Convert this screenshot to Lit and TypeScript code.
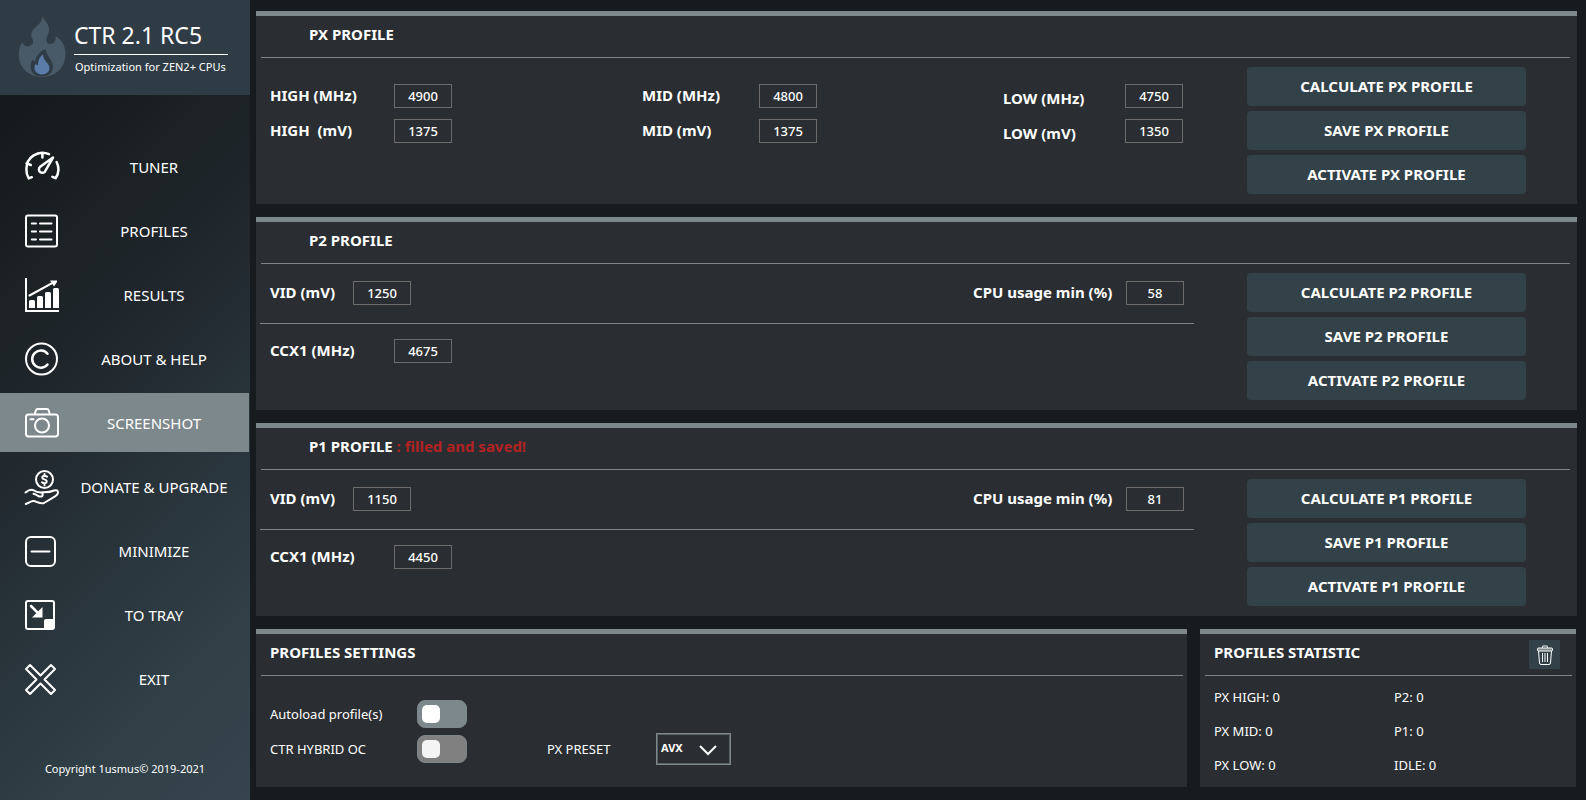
import { LitElement, html, css, svg, nothing, TemplateResult } from "lit";
import { customElement, property, state } from "lit/decorators.js";
import { classMap } from "lit/directives/class-map.js";

const icons: Record<string, TemplateResult> = {
  tuner: svg`
    <path class="bold" d="M6.800 27.200 3.800 28.400A16 16 0 0 1 1.400 19 16 16 0 0 1 24 4.200M31.600 12A16 16 0 0 1 30.600 28.200L27.400 26.800M17.400 3v4.500M1.600 13.400 5.800 15"/>
    <path class="bold" d="M28 7.600 20.600 20.400a3.400 3.400 0 1 1-5.400-3.600Z"/>`,
  profiles: svg`
    <rect x="1" y="1.500" width="31" height="31" rx="2"/>
    <path d="M6.800 9.500H11M15 9.500H26.500M6.800 17.500H11M15 17.500H26.500M6.800 25.500H11M15 25.500H26.500"/>`,
  results: svg`
    <path class="square" d="M1 0V33H34"/>
    <path d="M4.500 17.500 28 4.600"/>
    <path class="solid" d="M25 2.500h7v1.500l-3 4.500ZM4 23.500q0-1.500 1.500-1.500h3q1.500 0 1.500 1.500V30H4ZM12 19.500q0-1.500 1.500-1.500h3q1.500 0 1.500 1.500V30h-6ZM20 15.500q0-1.500 1.500-1.500h3q1.500 0 1.500 1.500V30h-6ZM28 11.500q0-1.500 1.500-1.500h3q1.500 0 1.500 1.500V30h-6Z"/>`,
  about: svg`
    <circle cx="16.500" cy="17" r="15.500"/>
    <path class="bold" d="M22.500 11.700A8.600 8.600 0 1 0 22.500 22.500"/>`,
  screenshot: svg`
    <path d="M3.500 8.500H9.500L11 4.200Q11.300 3 12.600 3H22Q23.200 3 23.600 4.200L25 8.500H30.500Q33 8.500 33 11V28Q33 30.400 30.500 30.400H3.500Q1 30.400 1 28V11Q1 8.500 3.500 8.500ZM9.500 8.500H25M5.500 13.200H8.500"/>
    <circle cx="17" cy="19.500" r="7"/>`,
  donate: svg`
    <circle cx="19.500" cy="9.500" r="8.500"/>
    <path d="M22 6.600Q19.500 5 17.600 6.300 16.400 8.400 19.500 9.400 22.600 10.400 21.400 12.500 19.500 13.900 17 12.400M19.500 4V6M19.500 13.500V15.200"/>
    <path d="M.500 22.500Q5 18.800 8.500 20.200 12.500 23 17.500 22.300 24.500 22.500 29 20.500 33 19.400 33 22.600 33 25 28 27.600L19 33Q17 34 12.500 32.300 8.500 30.500 6.500 31.400L.800 34M8.500 23.800Q11 24.400 13.500 26.300 17.500 27.200 17.600 25.500V22.500"/>`,
  minimize: svg`
    <rect x="1" y="3" width="29" height="29" rx="5"/>
    <path d="M6.500 17.500H24.500"/>`,
  tray: svg`
    <rect x="1" y="3" width="28" height="28" rx="2"/>
    <path class="bold" d="M6 8 13 15"/>
    <path class="solid" d="M17.500 9V19.500H7ZM19 23q0-2 2-2h8v10H19Z"/>`,
  exit: svg`
    <path d="M5 3 15.500 13.500 26 3 30 7 19.500 17.500 30 28 26 32 15.500 21.500 5 32 1 28 11.500 17.500 1 7Z"/>`,
};

interface NavItem {
  id: string;
  label: string;
}

const navItems: NavItem[] = [
  { id: "tuner", label: "TUNER" },
  { id: "profiles", label: "PROFILES" },
  { id: "results", label: "RESULTS" },
  { id: "about", label: "ABOUT & HELP" },
  { id: "screenshot", label: "SCREENSHOT" },
  { id: "donate", label: "DONATE & UPGRADE" },
  { id: "minimize", label: "MINIMIZE" },
  { id: "tray", label: "TO TRAY" },
  { id: "exit", label: "EXIT" },
];

@customElement("ctr-sidebar")
export class CtrSidebar extends LitElement {
  @state() private selected = "screenshot";

  static styles = css`
    :host {
      display: flex;
      flex-direction: column;
      width: 250px;
      flex: none;
      background: linear-gradient(135deg, #14191b 10%, #1a2022 25%, #20272d 43%, #28333a 62%, #313f47 82%, #36444d 100%);
      color: #fff;
    }
    .brand {
      display: flex;
      align-items: center;
      gap: 8px;
      height: 95px;
      padding: 0 22px 2px 18px;
      box-sizing: border-box;
      background: #2f3c45;
    }
    .flame {
      flex: none;
      width: 48px;
      height: 62px;
    }
    .title {
      margin: 0;
      padding-bottom: 2px;
      border-bottom: 1px solid #fff;
      font-size: 23px;
      line-height: 34px;
      font-weight: 400;
    }
    .words {
      flex: 1;
      white-space: nowrap;
    }
    .tagline {
      margin: 0;
      padding: 3px 0 0 1px;
      font-size: 11px;
      line-height: 18px;
    }
    nav {
      display: flex;
      flex-direction: column;
      gap: 5px;
      padding-top: 42px;
      margin-right: 1px;
    }
    .item {
      display: grid;
      grid-template-columns: 34px 1fr;
      align-items: center;
      height: 59px;
      padding: 0 0 0 25px;
      border: 0;
      background: none;
      color: inherit;
      font: 15px/20px "Noto Sans", sans-serif;
      cursor: pointer;
    }
    .item.selected {
      background: #7c888b;
    }
    .item svg {
      width: 34px;
      height: 34px;
      overflow: visible;
      fill: none;
      stroke: #fff;
      stroke-width: 2;
      stroke-linecap: round;
      stroke-linejoin: round;
    }
    .item .solid {
      fill: #fff;
      stroke: none;
    }
    .item .bold {
      stroke-width: 2.5;
    }
    .item .square {
      stroke-linecap: butt;
      stroke-linejoin: miter;
    }
    .copyright {
      margin: auto 0 22px;
      font-size: 11px;
      line-height: 18px;
      text-align: center;
    }
  `;

  render() {
    return html`
      <header class="brand">
        <svg class="flame" viewBox="0 0 48 62" aria-hidden="true">
          <path fill="#485968" d="M24 1C31 8 33 13 29.500 19.500 26.500 25 30 29.500 34 27.500 37.500 25.500 38 23 37.500 20 44 23.500 48 31 47.500 39 47 52 37 61 24 61S1 52 .800 39C.700 33 2 29 4.500 26 5 30 9 31.500 12.500 29.500 16.500 27 15 24 13.500 21 12.500 15 16 12.500 19.500 9.500 22.500 7 24 4.500 24 1Z"/>
          <path fill="#2f3c45" d="M27.500 33C28 37.500 30 39.500 32.500 43.500 38 52 34 60.500 24 60.500S10 52 14.500 44L17.500 46C17 41 21 36 27.500 33Z"/>
          <path fill="#5b7ba8" d="M25 38.500C25.500 43 27 44 29.500 47.500 34 53 30 58.500 24 58.500S14.500 53 17.500 48L20 49.500C20 45 21 41 25 38.500Z"/>
        </svg>
        <div class="words">
          <h1 class="title">CTR 2.1 RC5</h1>
          <p class="tagline">Optimization for ZEN2+ CPUs</p>
        </div>
      </header>
      <nav>
        ${navItems.map(
          (item) => html`
            <button
              class=${classMap({ item: true, selected: item.id === this.selected })}
              @click=${() => (this.selected = item.id)}
            >
              <svg viewBox="0 0 34 34" aria-hidden="true">${icons[item.id]}</svg>
              <span>${item.label}</span>
            </button>
          `
        )}
      </nav>
      <p class="copyright">Copyright 1usmus© 2019-2021</p>
    `;
  }
}

/** Titled card with the grey strip on top; body goes into the default slot. */
@customElement("ctr-panel")
export class CtrPanel extends LitElement {
  @property() heading = "";
  @property() note = "";
  @property({ type: Boolean }) indented = false;

  static styles = css`
    :host {
      display: block;
      border-top: 5px solid #7c888b;
      background: #2a2e32;
    }
    .head {
      display: flex;
      align-items: center;
      justify-content: space-between;
      box-sizing: border-box;
      height: 42px;
      margin: 0 4px 0 5px;
      padding: 0 12px 6px 9px;
      border-bottom: 1px solid #7c8488;
    }
    .head.indented {
      margin-right: 7px;
      padding-left: 48px;
    }
    h2 {
      margin: 0;
      font-size: 15px;
      line-height: 20px;
      font-weight: 700;
    }
    .note {
      color: #b22222;
    }
  `;

  render() {
    return html`
      <div class=${classMap({ head: true, indented: this.indented })}>
        <h2>${this.heading}${this.note ? html` <span class="note">${this.note}</span>` : nothing}</h2>
        <slot name="action"></slot>
      </div>
      <slot></slot>
    `;
  }
}

@customElement("ctr-profile")
export class CtrProfile extends LitElement {
  @property() name = "";
  @property() note = "";
  @property() vid = "";
  @property() usage = "";
  @property() ccx = "";

  static styles = css`
    .body {
      display: flex;
      gap: 53px;
      padding: 9px 51px 10px 4px;
    }
    .fields {
      flex: 1;
    }
    .levels {
      display: grid;
      grid-template-columns: 372fr 361fr 181px;
      row-gap: 11px;
      padding: 17px 10px 0 10px;
    }
    .row {
      display: flex;
      justify-content: space-between;
      padding: 8px 10px 18px;
      border-bottom: 1px solid #7c8488;
    }
    .row.last {
      padding-top: 15px;
      border-bottom: 0;
    }
    .field {
      display: flex;
      align-items: center;
      height: 24px;
      font-size: 15px;
      line-height: 20px;
      font-weight: 700;
      white-space: pre;
    }
    .field label {
      padding-bottom: 3px;
    }
    .high label,
    .ccx label {
      width: 124px;
    }
    .mid label {
      width: 117px;
    }
    .low label {
      width: 122px;
      padding: 3px 0 0;
    }
    .vid label {
      width: 83px;
    }
    .usage label {
      width: 153px;
    }
    input {
      box-sizing: border-box;
      width: 58px;
      height: 24px;
      padding: 0;
      border: 1px solid #6e6c6b;
      background: none;
      color: #fff;
      font: 500 13px/18px "Noto Sans", sans-serif;
      text-align: center;
    }
    .actions {
      display: flex;
      flex-direction: column;
      gap: 5px;
      width: 279px;
    }
    .actions button {
      height: 39px;
      padding: 0 0 1px;
      border: 0;
      border-radius: 4px;
      background: #334148;
      color: #fff;
      font: 700 15px/20px "Noto Sans", sans-serif;
      cursor: pointer;
    }
  `;

  private field(kind: string, id: string, label: string, value: string) {
    return html`<div class="field ${kind}"><label for=${id}>${label}</label><input id=${id} .value=${value} /></div>`;
  }

  render() {
    const fields = this.vid
      ? html`
          <div class="row">
            ${this.field("vid", "vid", "VID (mV)", this.vid)}
            ${this.field("usage", "usage", "CPU usage min (%)", this.usage)}
          </div>
          <div class="row last">${this.field("ccx", "ccx", "CCX1 (MHz)", this.ccx)}</div>
        `
      : html`
          <div class="levels">
            ${this.field("high", "high-mhz", "HIGH (MHz)", "4900")}
            ${this.field("mid", "mid-mhz", "MID (MHz)", "4800")}
            ${this.field("low", "low-mhz", "LOW (MHz)", "4750")}
            ${this.field("high", "high-mv", "HIGH  (mV)", "1375")}
            ${this.field("mid", "mid-mv", "MID (mV)", "1375")}
            ${this.field("low", "low-mv", "LOW (mV)", "1350")}
          </div>
        `;
    return html`
      <ctr-panel indented .heading=${`${this.name} PROFILE`} .note=${this.note}>
        <div class="body">
          <div class="fields">${fields}</div>
          <div class="actions">
            ${["CALCULATE", "SAVE", "ACTIVATE"].map((verb) => html`<button>${verb} ${this.name} PROFILE</button>`)}
          </div>
        </div>
      </ctr-panel>
    `;
  }
}

@customElement("ctr-settings")
export class CtrSettings extends LitElement {
  static styles = css`
    .body {
      display: flex;
      align-items: flex-end;
      gap: 80px;
      padding: 24px 14px 22px;
      font-size: 13px;
      line-height: 18px;
    }
    .toggles {
      display: grid;
      grid-template-columns: 147px 50px;
      row-gap: 7px;
      align-items: center;
      padding-bottom: 2px;
    }
    .toggle {
      appearance: none;
      display: flex;
      align-items: center;
      box-sizing: border-box;
      width: 50px;
      height: 28px;
      margin: 0;
      padding-left: 4px;
      border: 1px solid #7c888b;
      border-radius: 8px;
      background: #7c888b;
    }
    .toggle::before {
      content: "";
      width: 18px;
      height: 18px;
      border-radius: 5px;
      background: #fff;
    }
    .toggle:disabled {
      background: #808080;
    }
    .toggle:disabled::before {
      background: #f4f4f4;
    }
    .preset {
      display: flex;
      align-items: center;
    }
    .preset label {
      width: 109px;
    }
    .picker {
      position: relative;
    }
    select {
      appearance: none;
      display: block;
      box-sizing: border-box;
      width: 75px;
      height: 32px;
      padding: 0 0 2px 4px;
      border: 1px solid #7c888b;
      outline: 1px solid #596367;
      outline-offset: -2px;
      border-radius: 0;
      background: none;
      color: #fff;
      font: 700 11px/16px "Noto Sans", sans-serif;
    }
    .chevron {
      position: absolute;
      right: 14px;
      top: 12px;
      width: 18px;
      height: 11px;
      pointer-events: none;
    }
  `;

  render() {
    return html`
      <ctr-panel heading="PROFILES SETTINGS">
        <div class="body">
          <div class="toggles">
            <label for="autoload">Autoload profile(s)</label>
            <input class="toggle" type="checkbox" id="autoload" />
            <label for="hybrid">CTR HYBRID OC</label>
            <input class="toggle" type="checkbox" id="hybrid" disabled />
          </div>
          <div class="preset">
            <label for="preset">PX PRESET</label>
            <div class="picker">
              <select id="preset">
                <option>AVX</option>
              </select>
              <svg class="chevron" viewBox="0 0 18 11" aria-hidden="true">
                <path d="M1 1 9 9 17 1" fill="none" stroke="#fff" stroke-width="2" />
              </svg>
            </div>
          </div>
        </div>
      </ctr-panel>
    `;
  }
}

@customElement("ctr-statistic")
export class CtrStatistic extends LitElement {
  static styles = css`
    .body {
      display: grid;
      grid-template-columns: 180px 1fr;
      padding: 4px 14px 5px;
      font-size: 13px;
      line-height: 34px;
    }
    button {
      display: grid;
      place-items: center;
      width: 31px;
      height: 29px;
      padding: 0;
      margin-top: 6px;
      border: 0;
      background: #334148;
      cursor: pointer;
    }
    svg {
      width: 16px;
      height: 20px;
      fill: none;
      stroke: #fff;
    }
    .lid {
      fill: #7c888b;
    }
  `;

  render() {
    const counters = ["PX HIGH: 0", "P2: 0", "PX MID: 0", "P1: 0", "PX LOW: 0", "IDLE: 0"];
    return html`
      <ctr-panel heading="PROFILES STATISTIC">
        <button slot="action" aria-label="Clear statistic">
          <svg viewBox="0 0 16 20" aria-hidden="true">
            <path d="M5.500 3V1.500Q5.500 1 6 1h4q.500 0 .500.500V3M1.500 6 2.500 18Q2.600 19.500 4 19.500H12Q13.400 19.500 13.500 18L14.500 6M5.500 8v9M8 8v9M10.500 8v9" />
            <rect class="lid" x=".500" y="3" width="15" height="3" rx="1" />
          </svg>
        </button>
        <div class="body">${counters.map((text) => html`<span>${text}</span>`)}</div>
      </ctr-panel>
    `;
  }
}

@customElement("app-root")
export class AppRoot extends LitElement {
  static styles = css`
    :host {
      display: flex;
      min-height: 100vh;
      background: #161b1f;
      color: #fff;
      font-family: "Noto Sans", sans-serif;
    }
    main {
      flex: 1;
      display: flex;
      flex-direction: column;
      gap: 13px;
      padding: 11px 9px 13px 6px;
    }
    .bottom {
      display: grid;
      grid-template-columns: 1fr 376px;
      gap: 13px;
      padding-right: 1px;
    }
  `;

  render() {
    return html`
      <ctr-sidebar></ctr-sidebar>
      <main>
        <ctr-profile name="PX"></ctr-profile>
        <ctr-profile name="P2" vid="1250" usage="58" ccx="4675"></ctr-profile>
        <ctr-profile name="P1" note=": filled and saved!" vid="1150" usage="81" ccx="4450"></ctr-profile>
        <div class="bottom">
          <ctr-settings></ctr-settings>
          <ctr-statistic></ctr-statistic>
        </div>
      </main>
    `;
  }
}
